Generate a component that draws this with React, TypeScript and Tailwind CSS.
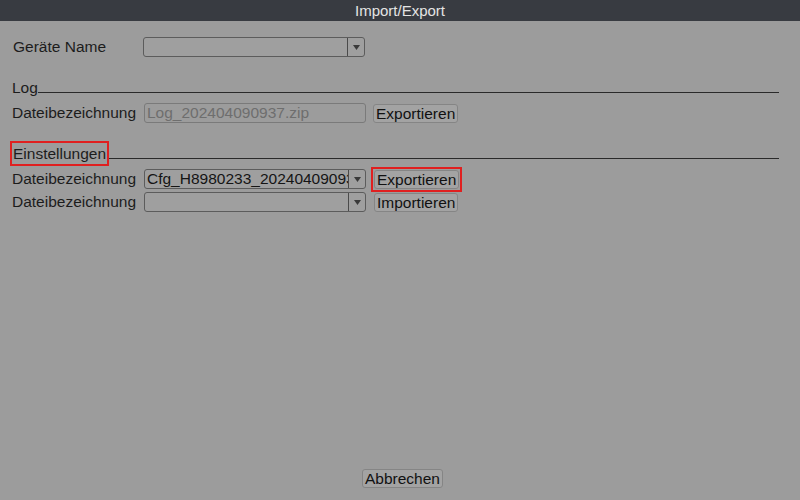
import React from "react";

const font = { fontFamily: '"Liberation Sans", Arial, sans-serif' };

function Arrow() {
  return (
    <div className="flex h-full w-[17px] items-center justify-center border-l border-[#4a4a4a]">
      <svg width="7" height="5" viewBox="0 0 7 5">
        <polygon points="0,0 7,0 3.5,5" fill="#3a3a3a" />
      </svg>
    </div>
  );
}

function Select({ value }: { value?: string }) {
  return (
    <div className="flex h-[20px] w-[222px] items-stretch rounded-[3px] border border-[#5c5c5c] bg-[#9f9f9f]">
      <div className="flex-1 overflow-hidden whitespace-nowrap pl-[2px] leading-[18px] text-[#151515]">{value}</div>
      <Arrow />
    </div>
  );
}

function Btn({ label, red }: { label: string; red?: boolean }) {
  const b = (
    <div className="h-[19px] rounded-[3px] border border-[#858585] bg-[#a3a3a3] px-[2px] leading-[17px] text-[#111]">{label}</div>
  );
  if (red) return <div className="-m-[3px] border-2 border-[#e02020] p-[1px]">{b}</div>;
  return b;
}

export default function App() {
  return (
    <div className="flex h-[500px] w-[800px] flex-col bg-[#9c9c9c] text-[15.5px] text-[#1c1c1c]" style={font}>
      <div className="flex h-[21px] items-center justify-center bg-[#383b41] text-[15px] leading-none text-[#e4e4e4]">Import/Export</div>
      <div className="flex flex-1 flex-col px-[12px]">
        <div className="mt-[16px] flex h-[20px] items-center">
          <div className="w-[131px] pl-[1px] leading-[18px]">Geräte Name</div>
          <Select />
        </div>
        <div className="mt-[22px] flex h-[18px] items-end pr-[9px]">
          <div className="leading-[18px]">Log</div>
          <div className="mb-[4px] h-px flex-1 bg-[#2a2a2a]" />
        </div>
        <div className="mt-[6px] flex h-[20px] items-center">
          <div className="w-[132px] leading-[18px]">Dateibezeichnung</div>
          <div className="h-[20px] w-[222px] rounded-[3px] border border-[#7a7a7a] pl-[2px] leading-[18px] text-[#6e6e6e]">Log_202404090937.zip</div>
          <div className="ml-[7px]"><Btn label="Exportieren" /></div>
        </div>
        <div className="mt-[18px] flex h-[25px] items-end pr-[9px]">
          <div className="-ml-[2px] h-[25px] border-2 border-[#e02020] px-[1px] leading-[21px]">Einstellungen</div>
          <div className="mb-[7px] h-px flex-1 bg-[#2a2a2a]" />
        </div>
        <div className="mt-[3px] flex h-[20px] items-center">
          <div className="w-[132px] leading-[18px]">Dateibezeichnung</div>
          <Select value="Cfg_H8980233_202404090937" />
          <div className="ml-[8px]"><Btn label="Exportieren" red /></div>
        </div>
        <div className="mt-[3px] flex h-[20px] items-center">
          <div className="w-[132px] leading-[18px]">Dateibezeichnung</div>
          <Select />
          <div className="ml-[8px]"><Btn label="Importieren" /></div>
        </div>
        <div className="mb-[12px] mt-auto flex justify-center">
          <div className="ml-[5px]"><Btn label="Abbrechen" /></div>
        </div>
      </div>
    </div>
  );
}
